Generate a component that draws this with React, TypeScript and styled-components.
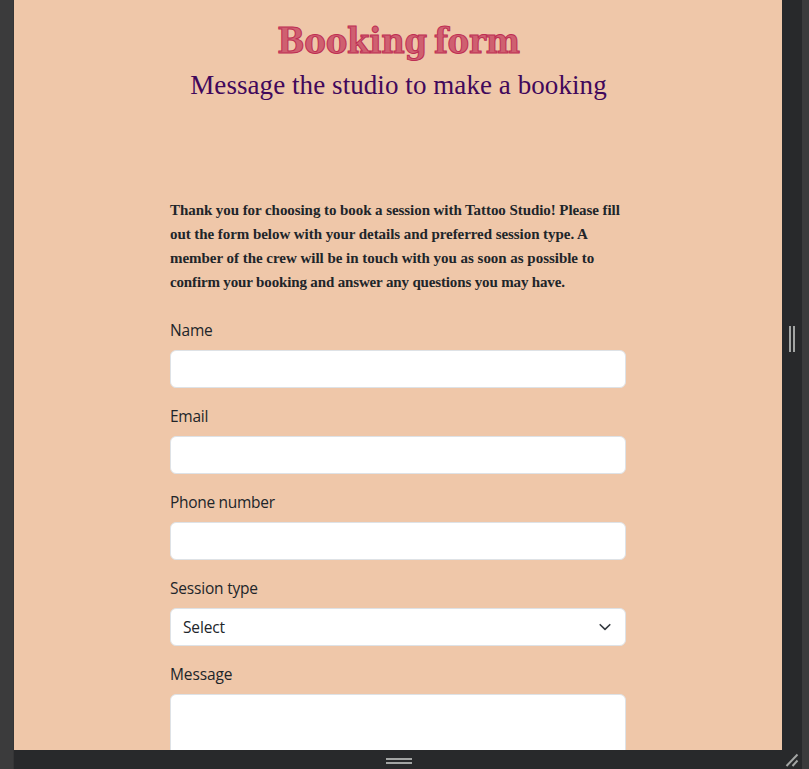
import React from "react";
import styled, { createGlobalStyle } from "styled-components";

const GlobalStyle = createGlobalStyle`
  *, *::before, *::after { box-sizing: border-box; }
  html, body { margin: 0; padding: 0; overflow: hidden; background: #3b3b3c; }
`;

const Viewer = styled.div`
  display: grid;
  grid-template-columns: 14px 768px 20px 7px;
  grid-template-rows: 750px 19px;
  width: 809px;
  height: 769px;
  overflow: hidden;
  background: #28292b;
`;

const Gutter = styled.div<{ $left?: boolean }>`
  grid-row: 1 / 3;
  grid-column: ${(p) => (p.$left ? 1 : 4)};
  background: #3b3b3c;
  box-shadow: ${(p) => (p.$left ? "inset -1px 0 #353536" : "none")};
`;

const Page = styled.main`
  grid-column: 2;
  grid-row: 1;
  overflow: hidden;
  background: #efc7a9;
  color: #212529;
  font-family: "Open Sans", "Noto Sans", sans-serif;
`;

const Header = styled.header`
  display: flex;
  flex-direction: column;
  align-items: center;
  height: 198px;
  padding: 16px 0 0 1px;
  white-space: nowrap;
`;

const Title = styled.h1`
  margin: 0 0 1px;
  font: bold 36px/48px "DejaVu Serif Condensed", "DejaVu Serif", serif;
  font-stretch: condensed;
  letter-spacing: -0.25px;
  word-spacing: -4px;
  color: #cf6070;
  -webkit-text-stroke: 1px #be2d53;
`;

const Subtitle = styled.h2`
  margin: 0;
  font: 400 27px/40px "Liberation Serif", serif;
  letter-spacing: 0.07px;
  color: #41085b;
`;

const Form = styled.form`
  width: 456px;
  margin: 0 auto;
`;

const Intro = styled.p`
  margin: 0 0 24px;
  font: bold 15px/24px "Liberation Serif", serif;
  white-space: nowrap;
`;

const Line = styled.span<{ $spacing: number }>`
  display: block;
  width: max-content;
  letter-spacing: ${(p) => p.$spacing}px;
`;

const Field = styled.div`
  margin-bottom: 16px;
`;

const Label = styled.label<{ $spacing: number }>`
  display: block;
  width: max-content;
  margin-bottom: 8px;
  font-size: 15.5px;
  line-height: 24px;
  letter-spacing: ${(p) => p.$spacing}px;
`;

const Input = styled.input`
  display: block;
  width: 100%;
  height: 38px;
  padding: 6px 12px;
  border: 1px solid #dee2e6;
  border-radius: 6px;
  background: #fff;
  outline: none;
`;

const SelectBox = styled.div`
  display: flex;
  align-items: center;
  justify-content: space-between;
  height: 38px;
  padding: 0 12px;
  border: 1px solid #dee2e6;
  border-radius: 6px;
  background: #fff;
  font-size: 15.5px;
  line-height: 24px;
  letter-spacing: -0.15px;
`;

const Message = styled.textarea`
  display: block;
  width: 100%;
  height: 110px;
  border: 1px solid #dee2e6;
  border-radius: 6px;
  background: #fff;
  resize: none;
  outline: none;
`;

const SideHandle = styled.div`
  grid-column: 3;
  grid-row: 1;
  display: flex;
  justify-content: center;
  align-items: flex-start;
  gap: 2px;
  padding-top: 326px;
`;

const BottomHandle = styled.div`
  grid-column: 2;
  grid-row: 2;
  display: flex;
  flex-direction: column;
  align-items: center;
  gap: 2px;
  padding: 8px 0 0 2px;
`;

const Bar = styled.span<{ $vertical?: boolean }>`
  width: ${(p) => (p.$vertical ? 2 : 26)}px;
  height: ${(p) => (p.$vertical ? 26 : 2)}px;
  background: #a3a5a4;
`;

const Corner = styled.div`
  grid-column: 3;
  grid-row: 2;
  svg { display: block; }
`;

const fields = [
  { id: "name", label: "Name", spacing: -0.2 },
  { id: "email", label: "Email", spacing: -0.25 },
  { id: "phone", label: "Phone number", spacing: -0.3 },
];

const intro = [
  { text: "Thank you for choosing to book a session with Tattoo Studio! Please fill", spacing: -0.07 },
  { text: "out the form below with your details and preferred session type. A", spacing: -0.06 },
  { text: "member of the crew will be in touch with you as soon as possible to", spacing: -0.03 },
  { text: "confirm your booking and answer any questions you may have.", spacing: -0.15 },
];

export default function App() {
  return (
    <>
      <GlobalStyle />
      <Viewer>
        <Gutter $left />
        <Page>
          <Header>
            <Title>Booking form</Title>
            <Subtitle>Message the studio to make a booking</Subtitle>
          </Header>
          <Form>
            <Intro>
              {intro.map((line) => (
                <Line key={line.text} $spacing={line.spacing}>{line.text}</Line>
              ))}
            </Intro>
            {fields.map((f) => (
              <Field key={f.id}>
                <Label htmlFor={f.id} $spacing={f.spacing}>{f.label}</Label>
                <Input id={f.id} />
              </Field>
            ))}
            <Field>
              <Label $spacing={-0.2}>Session type</Label>
              <SelectBox role="combobox" tabIndex={0}>
                Select
                <svg width="16" height="16" viewBox="0 0 16 16" fill="none" stroke="#343a40" strokeWidth="1.6" strokeLinecap="round" strokeLinejoin="round">
                  <path d="M3.2 5.7l4.8 4.7 4.8-4.7" />
                </svg>
              </SelectBox>
            </Field>
            <Field>
              <Label htmlFor="message" $spacing={-0.1}>Message</Label>
              <Message id="message" />
            </Field>
          </Form>
        </Page>
        <SideHandle>
          <Bar $vertical />
          <Bar $vertical />
        </SideHandle>
        <BottomHandle>
          <Bar />
          <Bar />
        </BottomHandle>
        <Corner>
          <svg width="20" height="19" viewBox="0 0 20 19" stroke="#a3a5a4" strokeWidth="2">
            <path d="M4.5 16L15.5 4.5M10.5 16L15.5 10.5" />
          </svg>
        </Corner>
        <Gutter />
      </Viewer>
    </>
  );
}
